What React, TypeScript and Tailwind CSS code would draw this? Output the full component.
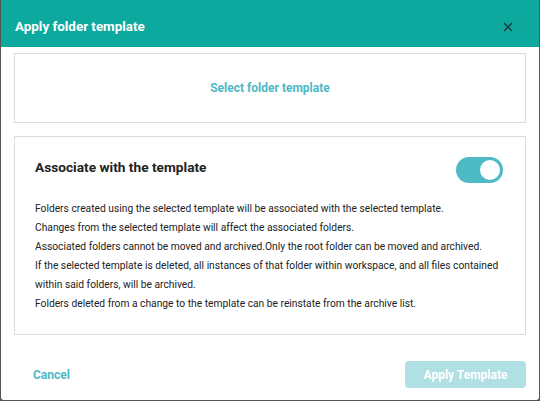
import React, { useState } from 'react';

const NOTES = [
  'Folders created using the selected template will be associated with the selected template.',
  'Changes from the selected template will affect the associated folders.',
  'Associated folders cannot be moved and archived.Only the root folder can be moved and archived.',
  'If the selected template is deleted, all instances of that folder within workspace, and all files contained within said folders, will be archived.',
  'Folders deleted from a change to the template can be reinstate from the archive list.',
];

export default function App() {
  const [associate, setAssociate] = useState(true);

  return (
    <div className="w-[540px] h-[401px] bg-[#555555] px-px pb-px" style={{ fontFamily: 'Roboto, "Liberation Sans", sans-serif' }}>
      <div className="h-full bg-white rounded-b-[3px] flex flex-col overflow-hidden">
        {/* Header */}
        <div className="h-[47px] bg-[#0da89e] flex items-center justify-between pl-[14px] pr-[26px] pt-[7px] shrink-0">
          <h2 className="text-[13.4px] font-bold text-white">Apply folder template</h2>
          <button className="text-[#1d3b3a]">
            <svg width="10" height="10" viewBox="0 0 10 10" fill="none" stroke="currentColor" strokeWidth="1.4">
              <path d="M1 1l8 8M9 1l-8 8" />
            </svg>
          </button>
        </div>

        {/* Body */}
        <div className="px-[13px] pt-[6px] flex flex-col gap-[13px]">
          <div className="h-[70px] border border-[#dcdcdc] flex items-center justify-center">
            <button className="text-[12px] font-bold text-[#4db8c5]">Select folder template</button>
          </div>

          <div className="border border-[#dcdcdc] px-[20px] pt-[20px] pb-[21px]">
            <div className="flex items-center justify-between">
              <h3 className="text-[13.7px] font-bold text-[#222222] pb-[5px]">Associate with the template</h3>
              <button
                onClick={() => setAssociate(!associate)}
                className="w-[47px] h-[26px] rounded-full bg-[#4dbac5] flex items-center justify-end px-[3px] mr-[2px]"
              >
                <span className="w-[20px] h-[20px] rounded-full bg-white block" />
              </button>
            </div>
            <div className="mt-[16px] text-[10.25px] leading-[19px] text-[#222222]">
              {NOTES.map((n) => (
                <p key={n}>{n}</p>
              ))}
            </div>
          </div>
        </div>

        {/* Footer */}
        <div className="flex items-center justify-between px-[13px] mt-[26px]">
          <button className="text-[12px] font-bold text-[#4db8c5] pl-[19px]">Cancel</button>
          <button className="w-[121px] h-[27px] rounded-[4px] bg-[#b0e0e4] text-white text-[12px] font-bold">Apply Template</button>
        </div>
      </div>
    </div>
  );
}
